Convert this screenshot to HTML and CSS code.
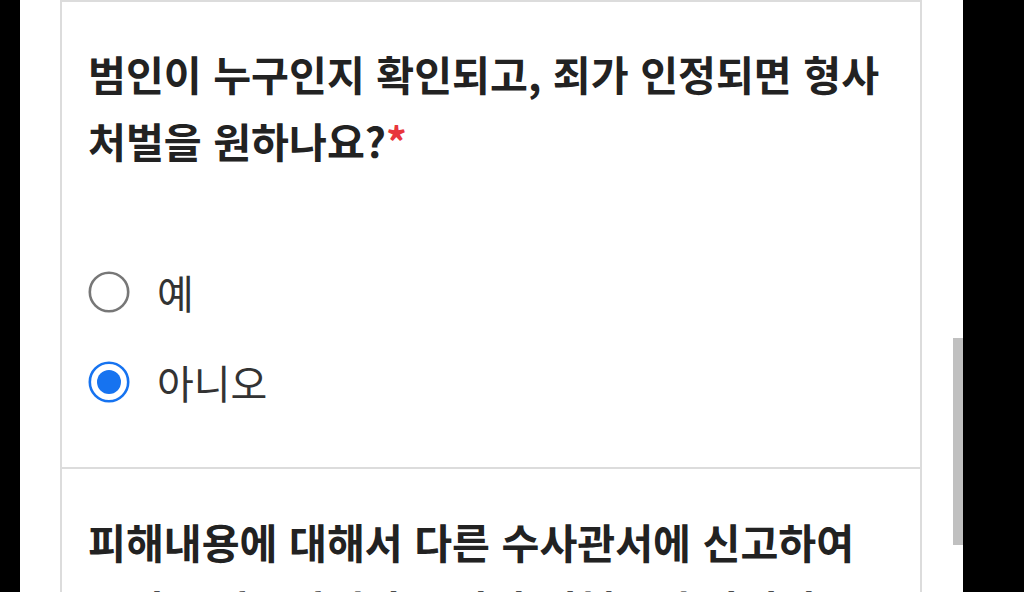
FILE: index.html
```html
<!DOCTYPE html>
<html lang="ko">
<head>
<meta charset="utf-8">
<link rel="stylesheet" href="styles.css">
</head>
<body>
<div class="screen">
  <div class="edge-left"></div>
  <div class="page">
    <div class="content">
      <div class="prev-card"></div>
      <section class="card">
        <h2 class="question">범인이 누구인지 확인되고, 죄가 인정되면 형사 처벌을 원하나요?<span class="req">*</span></h2>
        <div class="options">
          <label class="option">
            <svg class="radio" viewBox="0 0 42 42" width="42" height="42"><circle cx="21" cy="21" r="19.2" fill="#fff" stroke="#777" stroke-width="2.6"/></svg>
            <span class="opt-text">예</span>
          </label>
          <label class="option">
            <svg class="radio" viewBox="0 0 42 42" width="42" height="42"><circle cx="21" cy="21" r="19.2" fill="#fff" stroke="#1673f0" stroke-width="2.6"/><circle cx="21" cy="21" r="12" fill="#1673f0"/></svg>
            <span class="opt-text">아니오</span>
          </label>
        </div>
      </section>
      <section class="card">
        <h2 class="question">피해내용에 대해서 다른 수사관서에 신고하여 문서를 발급받거나 수사가 진행중인 사실이 있나요?<span class="req">*</span></h2>
      </section>
    </div>
    <div class="scroll-track"><div class="scroll-thumb"></div></div>
  </div>
  <div class="edge-right"></div>
</div>
</body>
</html>
```

FILE: styles.css
```css
html, body {
  margin: 0;
  padding: 0;
  width: 1024px;
  height: 592px;
  overflow: hidden;
  background: #000;
}
.screen {
  display: flex;
  width: 1024px;
  height: 592px;
  overflow: hidden;
  font-family: "Noto Sans CJK KR", "Noto Sans", sans-serif;
}
.edge-left {
  width: 20px;
  flex: none;
  background: #000;
}
.edge-right {
  flex: 1;
  background: #000;
}
.page {
  width: 943px;
  flex: none;
  background: #fff;
  display: flex;
  padding-left: 40px;
  box-sizing: border-box;
}
.content {
  width: 862px;
  flex: none;
  display: flex;
  flex-direction: column;
}
.prev-card {
  height: 4px;
  border-left: 2px solid #dcdcdc;
  border-right: 2px solid #dcdcdc;
  box-sizing: border-box;
}
.card {
  border-top: 2px solid #dcdcdc;
  border-left: 2px solid #dcdcdc;
  border-right: 2px solid #dcdcdc;
  padding: 38px 20px 40px 26px;
  box-sizing: border-box;
  flex: none;
}
.card + .card {
  padding-top: 39px;
}
.question {
  margin: 0;
  font-size: 41.2px;
  line-height: 67px;
  font-weight: 700;
  color: #222;
  letter-spacing: 0;
  word-break: keep-all;
}
.req {
  color: #e8363b;
}
.options {
  margin-top: 73px;
  display: flex;
  flex-direction: column;
}
.option {
  height: 90px;
  display: flex;
  align-items: center;
  gap: 27px;
}
.radio {
  flex: none;
  display: block;
}
.opt-text {
  font-size: 40px;
  line-height: 1;
  color: #333;
  font-weight: 400;
}
.scroll-track {
  flex: 1;
  position: relative;
}
.scroll-thumb {
  position: absolute;
  right: 0;
  top: 338px;
  width: 10px;
  height: 207px;
  background: #c0c0c0;
}
```
